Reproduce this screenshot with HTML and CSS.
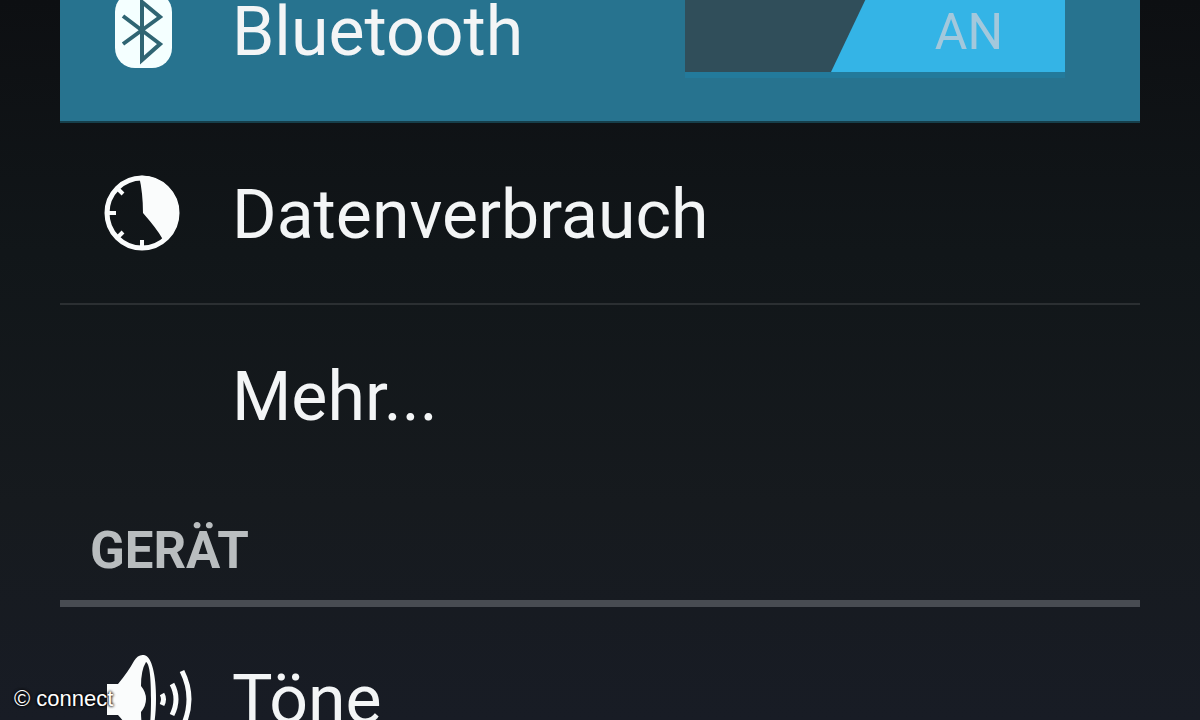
FILE: index.html
```
<!DOCTYPE html>
<html lang="de">
<head>
  <meta charset="UTF-8">
  <meta name="viewport" content="width=device-width, initial-scale=1.0">
  <title>Einstellungen</title>
  <link rel="stylesheet" href="styles.css">
</head>
<body>
  <main class="settings">
    <ul class="list">
      <li class="row active">
        <svg class="icon" viewBox="0 0 84 84" aria-hidden="true">
          <rect x="15" y="4" width="57" height="76" rx="20" fill="#f4ffff"/>
          <path d="M23 28 L60 56 L42 72 V14 L60 29 L23 56" fill="none" stroke="#2f6573" stroke-width="4"/>
        </svg>
        <label class="title" for="bluetooth">Bluetooth</label>
        <span class="switch">
          <input type="checkbox" id="bluetooth" checked>
          <span class="thumb">AN</span>
        </span>
      </li>
      <li class="row">
        <svg class="icon" viewBox="0 0 84 84" aria-hidden="true">
          <circle cx="42" cy="42" r="35" fill="none" stroke="#fafcfc" stroke-width="5"/>
          <path d="M39 5 A37 37 0 0 1 79 42 A37 37 0 0 1 63 71 L62 67 Q57 58 43 42 Q43 22 39 5 Z" fill="#fafcfc"/>
          <path d="M42 76 V69 M8 42 H16 M18 66 L23 61 M18 18 L23 23" stroke="#fafcfc" stroke-width="4"/>
        </svg>
        <a class="title" href="#datenverbrauch">Datenverbrauch</a>
      </li>
      <li class="row">
        <span class="icon"></span>
        <a class="title" href="#mehr">Mehr...</a>
      </li>
    </ul>
    <h2 class="heading">GERÄT</h2>
    <ul class="list">
      <li class="row">
        <svg class="icon" viewBox="0 0 84 84" aria-hidden="true">
          <path d="M7 28 H18 Q28 16 34 5 Q38 -2 44 -1 C52 0 56 20 56 43 S52 86 44 87 Q38 88 34 81 Q28 70 18 59 H7 Z" fill="#fafcfc"/>
          <path d="M46 6 C50 8 51 24 51 43 S50 78 46 80 Q41 72 41 56 Q46 50 46 43 T41 30 Q41 14 46 6 Z" fill="#171b22"/>
          <path d="M62 38 Q65 43 62 49 M72 28 Q80 43 72 59 M82 15 Q96 43 82 72" fill="none" stroke="#fafcfc" stroke-width="5"/>
        </svg>
        <a class="title" href="#toene">Töne</a>
      </li>
    </ul>
  </main>
  <footer class="credit">© connect</footer>
</body>
</html>
```
FILE: styles.css
```
* {
  margin: 0;
  padding: 0;
  box-sizing: border-box;
}
body {
  height: 100vh;
  overflow: hidden;
  background: linear-gradient(#0d0f12, #111619 35%, #161a1e 70%, #181c25);
  color: #f3f5f6;
  font-family: Roboto, sans-serif;
}
/* the list is scrolled, the first row is cut by the top edge */
.settings {
  margin: -61px 5% 0;
}
.list {
  list-style: none;
}
.row {
  display: flex;
  align-items: center;
  height: 182px;
  padding: 0 75px 0 40px;
}
.row + .row {
  border-top: 2px solid #2b2f32;
}
.active {
  background: #27738f;
}
.active + .row {
  border-top-color: #163f4b;
}
.icon {
  flex: none;
  width: 84px;
  height: 84px;
  margin-right: 48px;
  overflow: visible;
}
.title {
  flex: 1;
  padding-top: 4px;
  color: inherit;
  font-size: 68px;
  line-height: 80px;
  text-decoration: none;
}
.switch {
  position: relative;
  width: 380px;
  height: 84px;
  background: #304e5a;
  box-shadow: 0 6px 0 #237a9b;
}
.switch input {
  position: absolute;
  inset: 0;
  width: 100%;
  height: 100%;
  opacity: 0;
}
.thumb {
  display: block;
  width: 234px;
  height: 84px;
  margin-left: auto;
  padding-left: 42px;
  background: #34b4e6;
  color: #a3c8dc;
  font-size: 50px;
  line-height: 88px;
  text-align: center;
  clip-path: polygon(40px 0, 100% 0, 100% 100%, 0 100%);
  pointer-events: none;
}
.heading {
  padding: 34px 30px 17px;
  border-bottom: 7px solid #484c52;
  color: #b9bdbf;
  font-size: 51px;
  font-weight: 700;
  line-height: 64px;
}
.credit {
  position: absolute;
  left: 14px;
  bottom: 8px;
  color: #fff;
  font-family: "Liberation Sans", sans-serif;
  font-size: 22px;
  line-height: 26px;
  text-shadow: 0 0 3px #000, 0 0 3px #000;
}
```
